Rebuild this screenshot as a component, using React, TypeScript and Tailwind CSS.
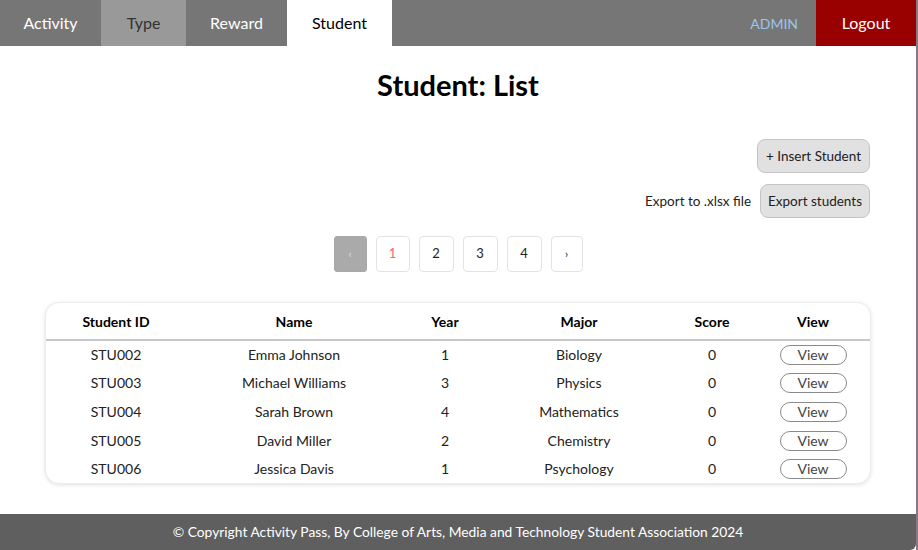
import React from "react";

const students = [
  { id: "STU002", name: "Emma Johnson", year: 1, major: "Biology", score: 0 },
  { id: "STU003", name: "Michael Williams", year: 3, major: "Physics", score: 0 },
  { id: "STU004", name: "Sarah Brown", year: 4, major: "Mathematics", score: 0 },
  { id: "STU005", name: "David Miller", year: 2, major: "Chemistry", score: 0 },
  { id: "STU006", name: "Jessica Davis", year: 1, major: "Psychology", score: 0 },
];

const tabs = [
  { label: "Activity", cls: "w-[101px] bg-[#767676] text-white" },
  { label: "Type", cls: "w-[85px] bg-[#999999] text-[#333333]" },
  { label: "Reward", cls: "w-[101px] bg-[#767676] text-white" },
  { label: "Student", cls: "w-[105px] bg-white text-black" },
];

const App: React.FC = () => {
  return (
    <div className="flex h-[550px] w-[918px] bg-[#8a7686] font-['Lato','Liberation_Sans',sans-serif]">
      <div className="flex h-full w-[916px] flex-col bg-white">
        {/* nav */}
        <nav className="flex h-[46px] items-stretch bg-[#767676] text-[16px]">
          {tabs.map((t) => (
            <div key={t.label} className={`flex items-center justify-center ${t.cls}`}>
              {t.label}
            </div>
          ))}
          <div className="flex-1" />
          <div className="flex items-center pr-[18px] text-[14px] text-[#9cc5ea]">ADMIN</div>
          <div className="flex w-[100px] items-center justify-center bg-[#990000] text-white">
            Logout
          </div>
        </nav>

        {/* main */}
        <main className="flex-1 px-[45px]">
          <h1 className="mt-[21px] text-center text-[29px] font-bold leading-[36px] text-black">
            Student: List
          </h1>

          <div className="mt-[36px] flex flex-col items-end gap-[11px] text-[13.5px] text-[#222]">
            <button className="h-[34px] rounded-[8px] border border-[#c4c4c4] bg-[#e1e1e1] px-[8px] mr-[1px]">
              + Insert Student
            </button>
            <div className="flex items-center gap-[9px]">
              <span>Export to .xlsx file</span>
              <button className="h-[34px] rounded-[8px] border border-[#c4c4c4] bg-[#e1e1e1] px-[7px] mr-[1px]">
                Export students
              </button>
            </div>
          </div>

          <div className="mt-[18px] flex justify-center gap-[9px] text-[13px] text-[#222]">
            <div className="flex h-[36px] w-[33px] items-center justify-center rounded-[3px] border border-[#a8a8a8] bg-[#aaaaaa] text-[11px] text-[#ddd]">
              ‹
            </div>
            <div className="flex h-[36px] w-[34px] items-center justify-center rounded-[4px] border border-[#e3e3e3] text-[#f06a6a]">
              1
            </div>
            {["2", "3", "4"].map((n) => (
              <div
                key={n}
                className="flex h-[36px] w-[35px] items-center justify-center rounded-[4px] border border-[#e3e3e3]"
              >
                {n}
              </div>
            ))}
            <div className="flex h-[36px] w-[32px] items-center justify-center rounded-[4px] border border-[#e3e3e3] text-[11px]">
              ›
            </div>
          </div>

          <div className="mt-[30px] w-[826px] overflow-hidden rounded-[14px] border border-[#ededed] bg-white shadow-[0_1px_4px_rgba(0,0,0,0.12)]">
            <table className="w-full table-fixed border-collapse text-[14px] text-[#222]">
              <colgroup>
                <col className="w-[140px]" />
                <col className="w-[216px]" />
                <col className="w-[86px]" />
                <col className="w-[182px]" />
                <col className="w-[84px]" />
                <col className="w-[118px]" />
              </colgroup>
              <thead>
                <tr className="h-[37px] border-b-2 border-[#c8c8c8] text-black">
                  <th className="font-bold">Student ID</th>
                  <th className="font-bold">Name</th>
                  <th className="font-bold">Year</th>
                  <th className="font-bold">Major</th>
                  <th className="font-bold">Score</th>
                  <th className="font-bold">View</th>
                </tr>
              </thead>
              <tbody>
                {students.map((s) => (
                  <tr key={s.id} className="h-[28.6px] text-center">
                    <td>{s.id}</td>
                    <td>{s.name}</td>
                    <td>{s.year}</td>
                    <td>{s.major}</td>
                    <td>{s.score}</td>
                    <td>
                      <button className="h-[20px] w-[67px] rounded-full border border-[#8a8a8a] bg-white text-[14px] leading-[18px] text-[#444]">
                        View
                      </button>
                    </td>
                  </tr>
                ))}
              </tbody>
            </table>
          </div>
        </main>

        {/* footer */}
        <footer className="flex h-[36px] items-center justify-center rounded-br-[6px] bg-[#5f5f5f] text-[13.8px] text-white">
          © Copyright Activity Pass, By College of Arts, Media and Technology Student Association 2024
        </footer>
      </div>
    </div>
  );
};

export default App;
